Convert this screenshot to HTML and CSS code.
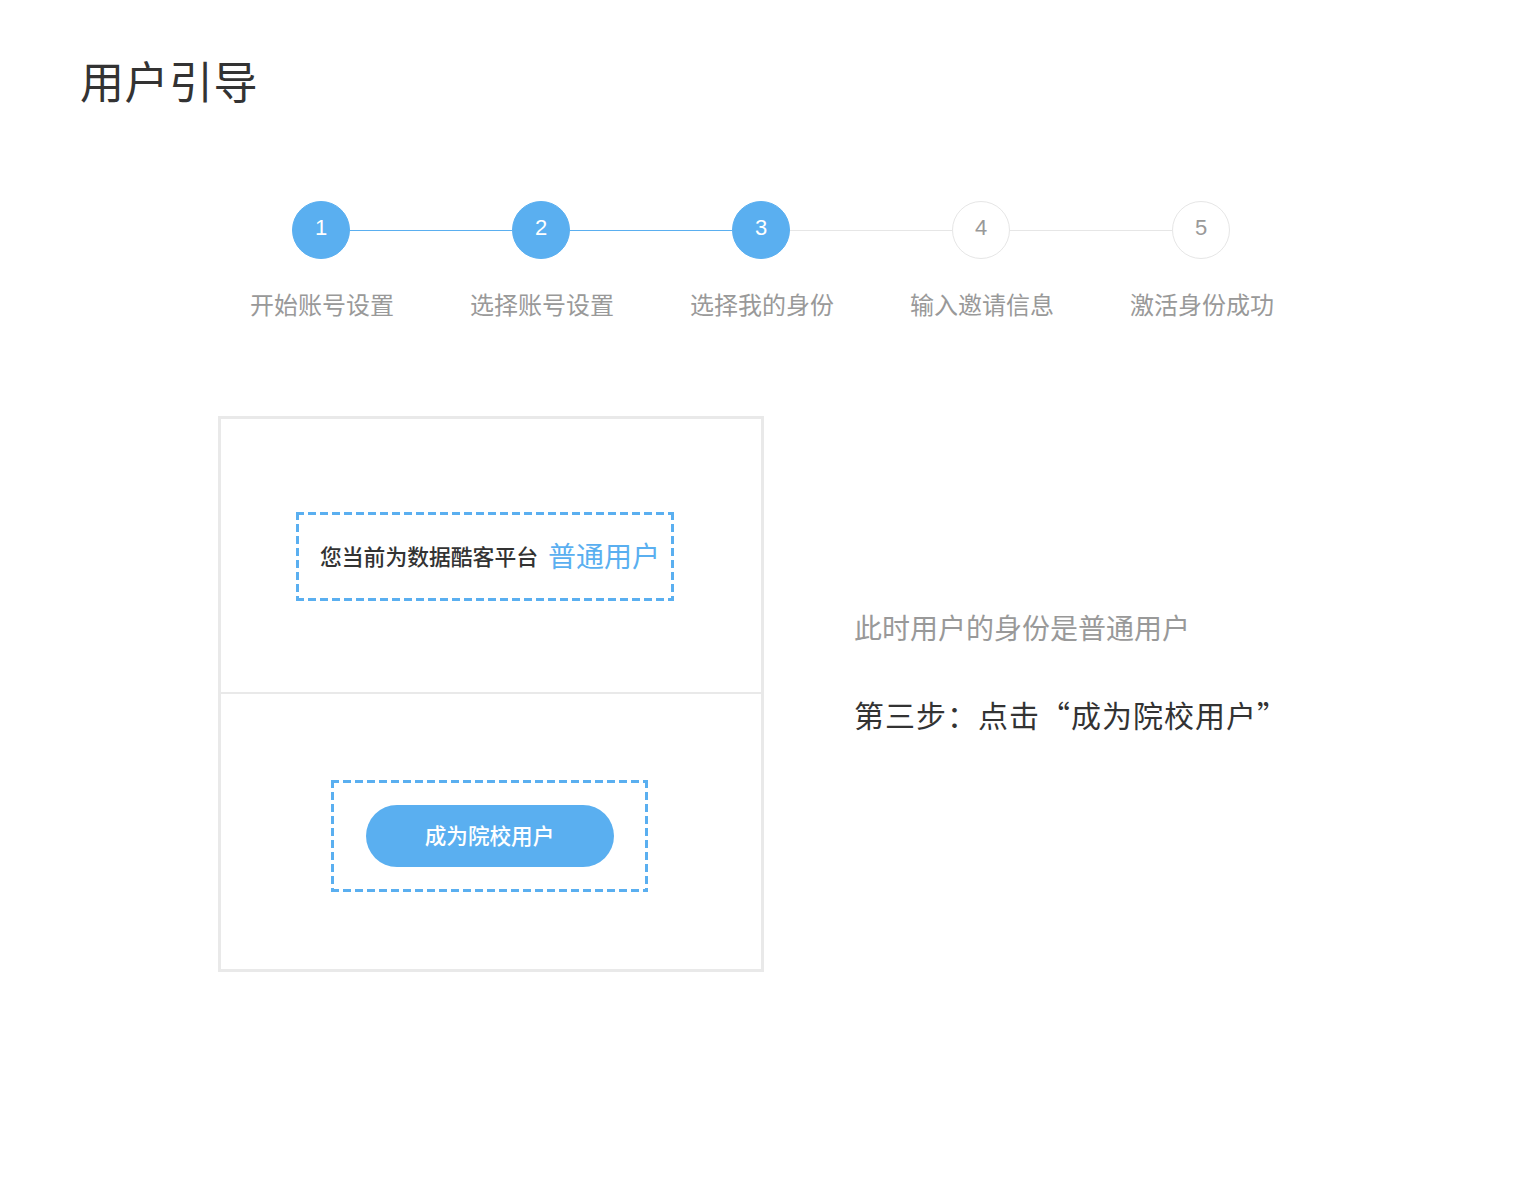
FILE: index.html
```html
<!DOCTYPE html>
<html lang="zh-CN">
<head>
<meta charset="utf-8">
<title>用户引导</title>
<link rel="stylesheet" href="styles.css">
</head>
<body>
<div class="page">
  <h1 class="title">用户引导</h1>

  <div class="steps">
    <div class="track">
      <div class="dot active">1</div>
      <div class="bar active"></div>
      <div class="dot active">2</div>
      <div class="bar active"></div>
      <div class="dot active">3</div>
      <div class="bar"></div>
      <div class="dot">4</div>
      <div class="bar"></div>
      <div class="dot">5</div>
    </div>
    <div class="labels">
      <div class="label">开始账号设置</div>
      <div class="label">选择账号设置</div>
      <div class="label">选择我的身份</div>
      <div class="label">输入邀请信息</div>
      <div class="label">激活身份成功</div>
    </div>
  </div>

  <div class="content">
    <div class="card">
      <div class="card-half card-top">
        <div class="dashed status-box">
          <span class="status-text">您当前为数据酷客平台</span>
          <span class="status-role">普通用户</span>
        </div>
      </div>
      <div class="card-half card-bottom">
        <div class="dashed button-box">
          <div class="cta">成为院校用户</div>
        </div>
      </div>
    </div>
    <div class="notes">
      <p class="note-sub">此时用户的身份是普通用户</p>
      <p class="note-main">第三步：点击“成为院校用户”</p>
    </div>
  </div>
</div>
</body>
</html>
```

FILE: styles.css
```css
* { box-sizing: border-box; }

html, body {
  margin: 0;
  padding: 0;
  background: #ffffff;
}

body {
  font-family: "Noto Sans CJK SC", "Noto Sans", "Liberation Sans", sans-serif;
  color: #333333;
}

.page {
  width: 1524px;
  min-height: 1200px;
  padding: 47px 0 0 0;
}

.title {
  margin: 0 0 0 80px;
  font-size: 44px;
  line-height: 66px;
  font-weight: 400;
  color: #333333;
  letter-spacing: 0.5px;
}

.steps {
  margin-top: 88px;
  width: 1100px;
  margin-left: 212px;
}

.track {
  display: flex;
  align-items: center;
  padding-left: 80px;
}

.dot {
  width: 58px;
  height: 58px;
  border-radius: 50%;
  border: 1px solid #e6e6e6;
  background: #ffffff;
  color: #999999;
  display: flex;
  align-items: center;
  justify-content: center;
  font-family: "Liberation Sans", Arial, sans-serif;
  font-size: 22px;
  flex: none;
  padding-bottom: 4px;
}

.dot.active {
  background: #5aaff0;
  border-color: #5aaff0;
  color: #ffffff;
}

.bar {
  width: 162px;
  height: 1px;
  background: #e6e6e6;
  flex: none;
}

.bar.active {
  background: #5aaff0;
}

.labels {
  display: grid;
  grid-template-columns: repeat(5, 220px);
  margin-top: 27px;
}

.label {
  text-align: center;
  font-size: 24px;
  line-height: 36px;
  color: #999999;
}

.content {
  display: flex;
  align-items: flex-start;
  margin-top: 94px;
  padding-left: 218px;
}

.card {
  width: 546px;
  height: 556px;
  border: 3px solid #e9e9e9;
  display: flex;
  flex-direction: column;
  flex: none;
}

.card-half {
  display: flex;
  align-items: center;
  justify-content: center;
}

.card-top {
  height: 275px;
  border-bottom: 2px solid #e9e9e9;
  padding-right: 12px;
  padding-top: 2px;
}

.card-bottom {
  flex: 1;
  padding-top: 8px;
  padding-right: 3px;
}

.dashed {
  background-image:
    repeating-linear-gradient(90deg, #5aaff0 0 8px, transparent 8px 12px),
    repeating-linear-gradient(90deg, #5aaff0 0 8px, transparent 8px 12px),
    repeating-linear-gradient(180deg, #5aaff0 0 8px, transparent 8px 12px),
    repeating-linear-gradient(180deg, #5aaff0 0 8px, transparent 8px 12px);
  background-size: 100% 3px, 100% 3px, 3px 100%, 3px 100%;
  background-position: 0 0, 0 100%, 0 0, 100% 0;
  background-repeat: no-repeat;
}

.status-box {
  width: 378px;
  height: 89px;
  display: flex;
  align-items: center;
  padding: 0 0 3px 24px;
}

.status-text {
  font-size: 21.8px;
  font-weight: 500;
  color: #333333;
}

.status-role {
  margin-left: 10px;
  font-size: 28px;
  color: #5aaff0;
}

.button-box {
  width: 317px;
  height: 112px;
  display: flex;
  align-items: center;
  justify-content: center;
}

.cta {
  width: 248px;
  height: 62px;
  border-radius: 31px;
  background: #5aaff0;
  color: #ffffff;
  font-size: 21.6px;
  font-weight: 500;
  display: flex;
  align-items: center;
  justify-content: center;
  padding-bottom: 2px;
}

.notes {
  margin-left: 90px;
  padding-top: 190px;
}

.note-sub {
  margin: 0;
  font-size: 28px;
  line-height: 42px;
  color: #999999;
}

.note-main {
  margin: 44px 0 0 0;
  font-size: 30px;
  line-height: 44px;
  color: #333333;
  letter-spacing: 1px;
}
```
